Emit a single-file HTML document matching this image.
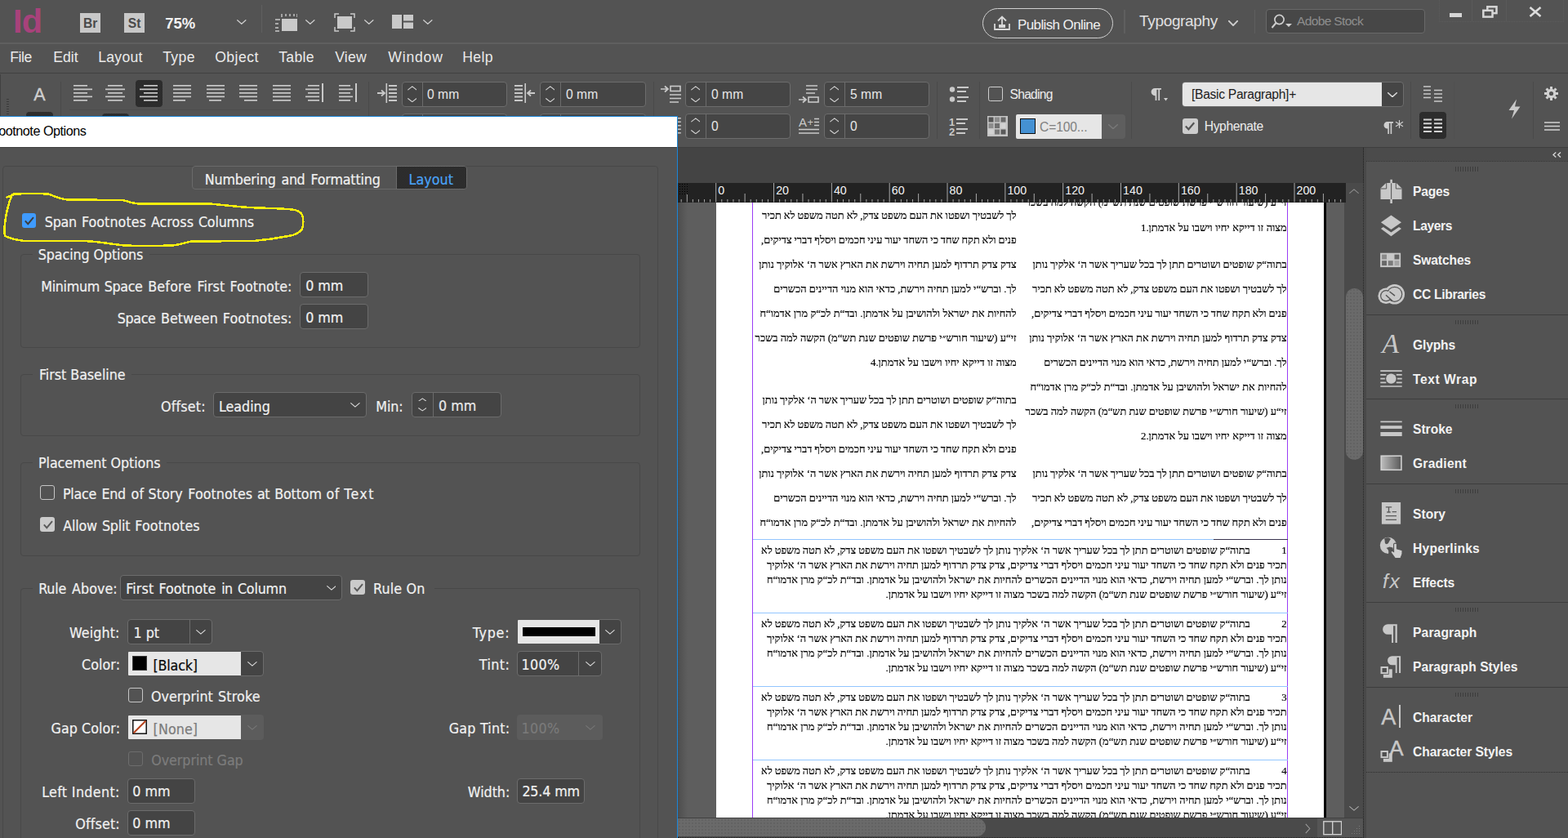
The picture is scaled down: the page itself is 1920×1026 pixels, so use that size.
<!DOCTYPE html>
<html lang="en">
<head>
<meta charset="utf-8">
<title>Footnote Options - Adobe InDesign</title>
<style>
html,body{margin:0;padding:0;background:#535353;}
body{width:1920px;height:1026px;overflow:hidden;position:relative;font-family:"Liberation Sans",sans-serif;color:#e4e4e4;}
#app{position:absolute;left:0;top:0;width:1920px;height:1026px;overflow:hidden;background:#535353;}
#app div,#app svg{position:absolute;box-sizing:border-box;}
.t{white-space:nowrap;line-height:1;}
.fl{font-family:"Liberation Sans",sans-serif;}
.fd{font-family:"DejaVu Sans Condensed","DejaVu Sans","Liberation Sans",sans-serif;font-stretch:condensed;}
.fs{font-family:"Liberation Serif","DejaVu Sans",serif;}

.h{white-space:nowrap;line-height:1;font-family:"Liberation Serif","DejaVu Sans",serif;font-size:12.8px;color:#000;-webkit-text-stroke:0.18px #000;}
.fd{-webkit-text-stroke:0.22px currentColor;}
</style>
</head>
<body>
<div id="app">
<div style="left:0px;top:0px;width:1920px;height:52px;background:#535353;"></div>
<div style="left:0px;top:52px;width:1920px;height:2px;background:#5f5f5f;"></div>
<div style="left:0px;top:54px;width:1920px;height:35px;background:#535353;"></div>
<div style="left:0px;top:89px;width:1920px;height:1.6px;background:#404040;"></div>
<div style="left:0px;top:90px;width:1920px;height:91px;background:#535353;"></div>
<div style="left:0px;top:180px;width:1920px;height:1px;background:#3e3e3e;"></div>
<div class="t fl" style="left:16.00px;top:5.00px;font-size:41.5px;letter-spacing:-0.690px;color:#a8427b;font-weight:700;">Id</div>
<div style="left:98.3px;top:15.5px;width:24.5px;height:24.3px;background:#c8c8c8;"></div>
<div class="t fl" style="left:101.94px;top:21.00px;font-size:15.6px;color:#4a4a4a;font-weight:700;">Br</div>
<div style="left:152.3px;top:15.5px;width:24.5px;height:24.3px;background:#c8c8c8;"></div>
<div class="t fl" style="left:156.80px;top:21.00px;font-size:15.6px;color:#4a4a4a;font-weight:700;">St</div>
<div class="t fl" style="left:202.30px;top:20.00px;font-size:18.5px;letter-spacing:-0.009px;color:#f2f2f2;font-weight:700;">75%</div>
<svg style="left:290.3px;top:24.2px;" width="11.6" height="6.2" viewBox="0 0 11.6 6.2"><polyline points="0.7,0.7 5.8,5.3 10.9,0.7" fill="none" stroke="#d0d0d0" stroke-width="1.2" stroke-linecap="round" stroke-linejoin="round"/></svg>
<div style="left:320px;top:6px;width:1px;height:34px;background:#5f5f5f;"></div>
<svg style="left:336px;top:16px;" width="28" height="23" viewBox="0 0 28 23"><rect x="9" y="7" width="19" height="15" fill="#c9c9c9"/><path d="M9 1v4M14 1v3M19 1v3M24 1v3M28 1v4M1 8h6M1 13h4M1 18h4M1 22h5" stroke="#c9c9c9" stroke-width="1.4" fill="none"/></svg>
<svg style="left:374.3px;top:24.2px;" width="11.6" height="6.2" viewBox="0 0 11.6 6.2"><polyline points="0.7,0.7 5.8,5.3 10.9,0.7" fill="none" stroke="#d0d0d0" stroke-width="1.2" stroke-linecap="round" stroke-linejoin="round"/></svg>
<svg style="left:409px;top:16px;" width="26" height="23" viewBox="0 0 26 23"><rect x="4" y="4" width="18" height="15" fill="#c9c9c9"/><path d="M1 6V1h5M20 1h5v5M25 17v5h-5M6 22H1v-5" stroke="#c9c9c9" stroke-width="1.5" fill="none"/></svg>
<svg style="left:446.3px;top:24.2px;" width="11.6" height="6.2" viewBox="0 0 11.6 6.2"><polyline points="0.7,0.7 5.8,5.3 10.9,0.7" fill="none" stroke="#d0d0d0" stroke-width="1.2" stroke-linecap="round" stroke-linejoin="round"/></svg>
<svg style="left:480px;top:18px;" width="26" height="18" viewBox="0 0 26 18"><rect x="0" y="0" width="12" height="17" fill="#c9c9c9"/><rect x="14" y="0" width="12" height="7.5" fill="#c9c9c9"/><rect x="14" y="9.5" width="12" height="7.5" fill="#c9c9c9"/></svg>
<svg style="left:518.3px;top:24.2px;" width="11.6" height="6.2" viewBox="0 0 11.6 6.2"><polyline points="0.7,0.7 5.8,5.3 10.9,0.7" fill="none" stroke="#d0d0d0" stroke-width="1.2" stroke-linecap="round" stroke-linejoin="round"/></svg>
<div style="left:1203px;top:10px;width:160px;height:37px;border:1px solid #d0d0d0;border-radius:18.5px;"></div>
<svg style="left:1216px;top:18px;" width="22" height="20" viewBox="0 0 22 20"><path d="M2 11v7h18v-7M11 14V3M6 7.5l5-5 5 5" fill="none" stroke="#d8d8d8" stroke-width="1.8"/><rect x="7" y="12" width="8" height="4" fill="#d8d8d8"/></svg>
<div class="t fl" style="left:1246.00px;top:22.00px;font-size:17px;letter-spacing:-0.616px;color:#f0f0f0;">Publish Online</div>
<div style="left:1376px;top:12px;width:1.5px;height:29px;background:#5f5f5f;"></div>
<div class="t fl" style="left:1395.00px;top:16.00px;font-size:19px;letter-spacing:-0.329px;color:#e0e0e0;">Typography</div>
<svg style="left:1504px;top:24.5px;" width="12" height="7" viewBox="0 0 12 7"><polyline points="0.7,0.7 6,6.1 11.3,0.7" fill="none" stroke="#d0d0d0" stroke-width="1.9" stroke-linecap="round" stroke-linejoin="round"/></svg>
<div style="left:1535.5px;top:12px;width:1.5px;height:29px;background:#5f5f5f;"></div>
<div style="left:1550px;top:11px;width:195px;height:30px;background:#474747;border:1px solid #696969;border-radius:4px;"></div>
<svg style="left:1556px;top:15px;" width="28" height="22" viewBox="0 0 28 22"><circle cx="10.5" cy="9" r="5.6" fill="none" stroke="#cfcfcf" stroke-width="1.7"/><path d="M6.5 13L1.5 19" stroke="#cfcfcf" stroke-width="2"/><path d="M18 14h8l-4 4z" fill="#cfcfcf"/></svg>
<div class="t fl" style="left:1588.00px;top:18.00px;font-size:15.5px;letter-spacing:-0.626px;color:#8e8e8e;">Adobe Stock</div>
<div style="left:1762px;top:-1px;width:153px;height:28px;border:1px solid #5c5c5c;border-style:dotted;border-top:none;"></div>
<div style="left:1802px;top:0px;width:1px;height:27px;background:#5a5a5a;"></div>
<div style="left:1844px;top:0px;width:1px;height:27px;background:#5a5a5a;"></div>
<div style="left:1775px;top:16px;width:15px;height:4.5px;background:#d6d6d6;"></div>
<svg style="left:1814.5px;top:7px;" width="19" height="15" viewBox="0 0 19 15"><rect x="6.300" y="1.300" width="11.200" height="7.800" fill="none" stroke="#d6d6d6" stroke-width="2.500"/><rect x="1.300" y="5.800" width="11.200" height="7.800" fill="#535353" stroke="#d6d6d6" stroke-width="2.500"/></svg>
<svg style="left:1872px;top:8px;" width="16" height="13" viewBox="0 0 16 13"><path d="M1.5 1l13 11M14.5 1l-13 11" stroke="#dcdcdc" stroke-width="2.6" fill="none"/></svg>
<div class="t fl" style="left:12.20px;top:62.00px;font-size:17.6px;letter-spacing:-0.437px;color:#eaeaea;">File</div>
<div class="t fl" style="left:65.20px;top:62.00px;font-size:17.6px;letter-spacing:0.071px;color:#eaeaea;">Edit</div>
<div class="t fl" style="left:120.20px;top:62.00px;font-size:17.6px;letter-spacing:0.296px;color:#eaeaea;">Layout</div>
<div class="t fl" style="left:199.20px;top:62.00px;font-size:17.6px;letter-spacing:0.364px;color:#eaeaea;">Type</div>
<div class="t fl" style="left:263.20px;top:62.00px;font-size:17.6px;letter-spacing:0.459px;color:#eaeaea;">Object</div>
<div class="t fl" style="left:341.20px;top:62.00px;font-size:17.6px;letter-spacing:0.308px;color:#eaeaea;">Table</div>
<div class="t fl" style="left:410.20px;top:62.00px;font-size:17.6px;letter-spacing:0.196px;color:#eaeaea;">View</div>
<div class="t fl" style="left:475.20px;top:62.00px;font-size:17.6px;letter-spacing:0.838px;color:#eaeaea;">Window</div>
<div class="t fl" style="left:566.20px;top:62.00px;font-size:17.6px;letter-spacing:0.354px;color:#eaeaea;">Help</div>
<div style="left:8px;top:121px;width:3px;height:22px;background:repeating-linear-gradient(180deg,#3a3a3a 0 1px,transparent 1px 3px);"></div>
<div style="left:0px;top:91px;width:1px;height:52px;background:#414141;"></div>
<div class="t fl" style="left:41.30px;top:106.00px;font-size:21.5px;color:#cfcfcf;-webkit-text-stroke:0.400px #cfcfcf;">A</div>
<div style="left:74px;top:100px;width:1px;height:43px;background:#4a4a4a;"></div>
<div style="left:32px;top:137px;width:33px;height:10px;border-radius:4px;background:repeating-conic-gradient(#242424 0% 25%,#353535 0% 50%) 0 0/2px 2px;"></div>
<div style="left:125px;top:139px;width:33px;height:10px;border-radius:4px;background:repeating-conic-gradient(#242424 0% 25%,#353535 0% 50%) 0 0/2px 2px;"></div>
<div style="left:85px;top:134px;width:356px;height:1px;background:#4d4d4d;"></div>
<div style="left:166px;top:98px;width:33px;height:33px;background:#2b2b2b;border-radius:4px;background:repeating-conic-gradient(#242424 0% 25%,#353535 0% 50%) 0 0/2px 2px;"></div>
<svg style="left:90px;top:104px;" width="26" height="22" viewBox="0 0 26 22"><rect x="0" y="0" width="17" height="1.7" fill="#c9c9c9"/><rect x="0" y="4.5" width="23" height="1.7" fill="#c9c9c9"/><rect x="0" y="9" width="17" height="1.7" fill="#c9c9c9"/><rect x="0" y="13.5" width="23" height="1.7" fill="#c9c9c9"/><rect x="0" y="18" width="17" height="1.7" fill="#c9c9c9"/></svg>
<svg style="left:129px;top:104px;" width="26" height="22" viewBox="0 0 26 22"><rect x="3" y="0" width="18" height="1.7" fill="#c9c9c9"/><rect x="0" y="4.5" width="24" height="1.7" fill="#c9c9c9"/><rect x="3" y="9" width="18" height="1.7" fill="#c9c9c9"/><rect x="0" y="13.5" width="24" height="1.7" fill="#c9c9c9"/><rect x="3" y="18" width="18" height="1.7" fill="#c9c9c9"/></svg>
<svg style="left:171px;top:104px;" width="26" height="22" viewBox="0 0 26 22"><rect x="5" y="0" width="17" height="1.7" fill="#c9c9c9"/><rect x="0" y="4.5" width="22" height="1.7" fill="#c9c9c9"/><rect x="5" y="9" width="17" height="1.7" fill="#c9c9c9"/><rect x="0" y="13.5" width="22" height="1.7" fill="#c9c9c9"/><rect x="5" y="18" width="17" height="1.7" fill="#c9c9c9"/></svg>
<svg style="left:212px;top:104px;" width="26" height="22" viewBox="0 0 26 22"><rect x="0" y="0" width="22" height="1.7" fill="#c9c9c9"/><rect x="0" y="4.5" width="22" height="1.7" fill="#c9c9c9"/><rect x="0" y="9" width="22" height="1.7" fill="#c9c9c9"/><rect x="0" y="13.5" width="22" height="1.7" fill="#c9c9c9"/><rect x="0" y="18" width="15" height="1.7" fill="#c9c9c9"/></svg>
<svg style="left:253px;top:104px;" width="26" height="22" viewBox="0 0 26 22"><rect x="0" y="0" width="22" height="1.7" fill="#c9c9c9"/><rect x="0" y="4.5" width="22" height="1.7" fill="#c9c9c9"/><rect x="0" y="9" width="22" height="1.7" fill="#c9c9c9"/><rect x="0" y="13.5" width="22" height="1.7" fill="#c9c9c9"/><rect x="3" y="18" width="15" height="1.7" fill="#c9c9c9"/></svg>
<svg style="left:293px;top:104px;" width="26" height="22" viewBox="0 0 26 22"><rect x="0" y="0" width="22" height="1.7" fill="#c9c9c9"/><rect x="0" y="4.5" width="22" height="1.7" fill="#c9c9c9"/><rect x="0" y="9" width="22" height="1.7" fill="#c9c9c9"/><rect x="0" y="13.5" width="22" height="1.7" fill="#c9c9c9"/><rect x="6" y="18" width="16" height="1.7" fill="#c9c9c9"/></svg>
<svg style="left:334px;top:104px;" width="26" height="22" viewBox="0 0 26 22"><rect x="0" y="0" width="22" height="1.7" fill="#c9c9c9"/><rect x="0" y="4.5" width="22" height="1.7" fill="#c9c9c9"/><rect x="0" y="9" width="22" height="1.7" fill="#c9c9c9"/><rect x="0" y="13.5" width="22" height="1.7" fill="#c9c9c9"/><rect x="0" y="18" width="22" height="1.7" fill="#c9c9c9"/></svg>
<svg style="left:374px;top:104px;" width="26" height="22" viewBox="0 0 26 22"><rect x="3" y="0" width="14" height="1.7" fill="#c9c9c9"/><rect x="0" y="4.5" width="17" height="1.7" fill="#c9c9c9"/><rect x="3" y="9" width="14" height="1.7" fill="#c9c9c9"/><rect x="0" y="13.5" width="17" height="1.7" fill="#c9c9c9"/><rect x="3" y="18" width="14" height="1.7" fill="#c9c9c9"/></svg>
<svg style="left:415px;top:104px;" width="26" height="22" viewBox="0 0 26 22"><rect x="0" y="0" width="14" height="1.7" fill="#c9c9c9"/><rect x="0" y="4.5" width="17" height="1.7" fill="#c9c9c9"/><rect x="0" y="9" width="14" height="1.7" fill="#c9c9c9"/><rect x="0" y="13.5" width="17" height="1.7" fill="#c9c9c9"/><rect x="0" y="18" width="14" height="1.7" fill="#c9c9c9"/></svg>
<div style="left:393.5px;top:102px;width:2px;height:23px;background:#c9c9c9;"></div>
<div style="left:434.5px;top:102px;width:2px;height:23px;background:#c9c9c9;"></div>
<div style="left:451px;top:100px;width:1px;height:80px;background:#4a4a4a;"></div>
<svg style="left:461px;top:102px;" width="26" height="24" viewBox="0 0 26 24"><path d="M1 12h8M6 8.5l4 3.5-4 3.5" stroke="#c9c9c9" stroke-width="1.8" fill="none"/><rect x="11.5" y="0" width="1.6" height="24" fill="#c9c9c9"/><path d="M15 3h10M15 7.5h10M15 12h10M15 16.5h10M15 21h10" stroke="#c9c9c9" stroke-width="1.8"/></svg>
<div style="left:492px;top:100px;width:129px;height:31px;background:#454545;border:1px solid #6c6c6c;border-radius:4px;"></div>
<div style="left:517px;top:101px;width:1px;height:29px;background:#6c6c6c;"></div>
<svg style="left:498.7px;top:105.2px;" width="11.6" height="5.6" viewBox="0 0 11.6 5.6"><polyline points="0.7,4.8999999999999995 5.8,0.9 10.9,4.8999999999999995" fill="none" stroke="#d4d4d4" stroke-width="1.1" stroke-linecap="round" stroke-linejoin="round"/></svg>
<svg style="left:498.7px;top:119.9px;" width="11.6" height="5.6" viewBox="0 0 11.6 5.6"><polyline points="0.7,0.7 5.8,4.7 10.9,0.7" fill="none" stroke="#d4d4d4" stroke-width="1.1" stroke-linecap="round" stroke-linejoin="round"/></svg>
<div class="t fl" style="left:523.00px;top:108.00px;font-size:15.6px;letter-spacing:0.054px;color:#e8e8e8;">0 mm</div>
<svg style="left:630px;top:102px;" width="26" height="24" viewBox="0 0 26 24"><path d="M25 12h-8M20 8.5l-4 3.5 4 3.5" stroke="#c9c9c9" stroke-width="1.8" fill="none"/><rect x="12.4" y="0" width="1.6" height="24" fill="#c9c9c9"/><path d="M0 3h10M0 7.5h10M0 12h10M0 16.5h10M0 21h10" stroke="#c9c9c9" stroke-width="1.8"/></svg>
<div style="left:661px;top:100px;width:130px;height:31px;background:#454545;border:1px solid #6c6c6c;border-radius:4px;"></div>
<div style="left:686px;top:101px;width:1px;height:29px;background:#6c6c6c;"></div>
<svg style="left:667.7px;top:105.2px;" width="11.6" height="5.6" viewBox="0 0 11.6 5.6"><polyline points="0.7,4.8999999999999995 5.8,0.9 10.9,4.8999999999999995" fill="none" stroke="#d4d4d4" stroke-width="1.1" stroke-linecap="round" stroke-linejoin="round"/></svg>
<svg style="left:667.7px;top:119.9px;" width="11.6" height="5.6" viewBox="0 0 11.6 5.6"><polyline points="0.7,0.7 5.8,4.7 10.9,0.7" fill="none" stroke="#d4d4d4" stroke-width="1.1" stroke-linecap="round" stroke-linejoin="round"/></svg>
<div class="t fl" style="left:693.00px;top:108.00px;font-size:15.6px;letter-spacing:0.054px;color:#e8e8e8;">0 mm</div>
<div style="left:492px;top:139px;width:129px;height:31px;background:#454545;border:1px solid #6c6c6c;border-radius:4px;"></div>
<div style="left:517px;top:140px;width:1px;height:29px;background:#6c6c6c;"></div>
<svg style="left:498.7px;top:144.2px;" width="11.6" height="5.6" viewBox="0 0 11.6 5.6"><polyline points="0.7,4.8999999999999995 5.8,0.9 10.9,4.8999999999999995" fill="none" stroke="#d4d4d4" stroke-width="1.1" stroke-linecap="round" stroke-linejoin="round"/></svg>
<svg style="left:498.7px;top:158.9px;" width="11.6" height="5.6" viewBox="0 0 11.6 5.6"><polyline points="0.7,0.7 5.8,4.7 10.9,0.7" fill="none" stroke="#d4d4d4" stroke-width="1.1" stroke-linecap="round" stroke-linejoin="round"/></svg>
<div style="left:661px;top:139px;width:130px;height:31px;background:#454545;border:1px solid #6c6c6c;border-radius:4px;"></div>
<div style="left:686px;top:140px;width:1px;height:29px;background:#6c6c6c;"></div>
<svg style="left:667.7px;top:144.2px;" width="11.6" height="5.6" viewBox="0 0 11.6 5.6"><polyline points="0.7,4.8999999999999995 5.8,0.9 10.9,4.8999999999999995" fill="none" stroke="#d4d4d4" stroke-width="1.1" stroke-linecap="round" stroke-linejoin="round"/></svg>
<svg style="left:667.7px;top:158.9px;" width="11.6" height="5.6" viewBox="0 0 11.6 5.6"><polyline points="0.7,0.7 5.8,4.7 10.9,0.7" fill="none" stroke="#d4d4d4" stroke-width="1.1" stroke-linecap="round" stroke-linejoin="round"/></svg>
<div style="left:799.5px;top:100px;width:1px;height:80px;background:#4a4a4a;"></div>
<svg style="left:809px;top:104px;" width="26" height="24" viewBox="0 0 26 24"><path d="M0 5h8M5 1.5l4 3.5-4 3.5" stroke="#c9c9c9" stroke-width="1.7" fill="none"/><rect x="12" y="1.5" width="12" height="6" fill="none" stroke="#c9c9c9" stroke-width="1.6"/><path d="M11 12h14M11 16.5h14M11 21h11" stroke="#c9c9c9" stroke-width="1.7"/></svg>
<div style="left:839px;top:100px;width:129px;height:31px;background:#454545;border:1px solid #6c6c6c;border-radius:4px;"></div>
<div style="left:864px;top:101px;width:1px;height:29px;background:#6c6c6c;"></div>
<svg style="left:845.7px;top:105.2px;" width="11.6" height="5.6" viewBox="0 0 11.6 5.6"><polyline points="0.7,4.8999999999999995 5.8,0.9 10.9,4.8999999999999995" fill="none" stroke="#d4d4d4" stroke-width="1.1" stroke-linecap="round" stroke-linejoin="round"/></svg>
<svg style="left:845.7px;top:119.9px;" width="11.6" height="5.6" viewBox="0 0 11.6 5.6"><polyline points="0.7,0.7 5.8,4.7 10.9,0.7" fill="none" stroke="#d4d4d4" stroke-width="1.1" stroke-linecap="round" stroke-linejoin="round"/></svg>
<div class="t fl" style="left:871.00px;top:108.00px;font-size:15.6px;letter-spacing:0.054px;color:#e8e8e8;">0 mm</div>
<svg style="left:830px;top:143px;" width="5" height="22" viewBox="0 0 5 22"><path d="M0 1.800h3.800M0 6.300h3.800M0 10.800h3.800M0 15.300h3.800M0 19.800h3.800" stroke="#c9c9c9" stroke-width="1.500"/></svg>
<div style="left:839px;top:139px;width:129px;height:31px;background:#454545;border:1px solid #6c6c6c;border-radius:4px;"></div>
<div style="left:864px;top:140px;width:1px;height:29px;background:#6c6c6c;"></div>
<svg style="left:845.7px;top:144.2px;" width="11.6" height="5.6" viewBox="0 0 11.6 5.6"><polyline points="0.7,4.8999999999999995 5.8,0.9 10.9,4.8999999999999995" fill="none" stroke="#d4d4d4" stroke-width="1.1" stroke-linecap="round" stroke-linejoin="round"/></svg>
<svg style="left:845.7px;top:158.9px;" width="11.6" height="5.6" viewBox="0 0 11.6 5.6"><polyline points="0.7,0.7 5.8,4.7 10.9,0.7" fill="none" stroke="#d4d4d4" stroke-width="1.1" stroke-linecap="round" stroke-linejoin="round"/></svg>
<div class="t fl" style="left:871.00px;top:147.00px;font-size:15.6px;color:#e8e8e8;">0</div>
<svg style="left:978px;top:104px;" width="26" height="24" viewBox="0 0 26 24"><path d="M9 1h14M9 5.5h14M9 10h11" stroke="#c9c9c9" stroke-width="1.7"/><path d="M0 18h8M5 14.5l4 3.5-4 3.5" stroke="#c9c9c9" stroke-width="1.7" fill="none"/><rect x="12" y="15" width="12" height="6" fill="none" stroke="#c9c9c9" stroke-width="1.6"/></svg>
<div style="left:1009px;top:100px;width:129px;height:31px;background:#454545;border:1px solid #6c6c6c;border-radius:4px;"></div>
<div style="left:1034px;top:101px;width:1px;height:29px;background:#6c6c6c;"></div>
<svg style="left:1015.7px;top:105.2px;" width="11.6" height="5.6" viewBox="0 0 11.6 5.6"><polyline points="0.7,4.8999999999999995 5.8,0.9 10.9,4.8999999999999995" fill="none" stroke="#d4d4d4" stroke-width="1.1" stroke-linecap="round" stroke-linejoin="round"/></svg>
<svg style="left:1015.7px;top:119.9px;" width="11.6" height="5.6" viewBox="0 0 11.6 5.6"><polyline points="0.7,0.7 5.8,4.7 10.9,0.7" fill="none" stroke="#d4d4d4" stroke-width="1.1" stroke-linecap="round" stroke-linejoin="round"/></svg>
<div class="t fl" style="left:1041.00px;top:108.00px;font-size:15.6px;letter-spacing:0.054px;color:#e8e8e8;">5 mm</div>
<div class="t fl" style="left:978.00px;top:142.00px;font-size:15px;color:#c9c9c9;">A</div>
<div class="t fl" style="left:988.50px;top:143.00px;font-size:13px;color:#c9c9c9;">+</div>
<svg style="left:978px;top:144px;" width="26" height="22" viewBox="0 0 26 22"><path d="M19 1.5h6M19 5.5h6M19 9.5h6M0 14.5h25M0 19h25" stroke="#c9c9c9" stroke-width="1.6"/></svg>
<div style="left:1009px;top:139px;width:129px;height:31px;background:#454545;border:1px solid #6c6c6c;border-radius:4px;"></div>
<div style="left:1034px;top:140px;width:1px;height:29px;background:#6c6c6c;"></div>
<svg style="left:1015.7px;top:144.2px;" width="11.6" height="5.6" viewBox="0 0 11.6 5.6"><polyline points="0.7,4.8999999999999995 5.8,0.9 10.9,4.8999999999999995" fill="none" stroke="#d4d4d4" stroke-width="1.1" stroke-linecap="round" stroke-linejoin="round"/></svg>
<svg style="left:1015.7px;top:158.9px;" width="11.6" height="5.6" viewBox="0 0 11.6 5.6"><polyline points="0.7,0.7 5.8,4.7 10.9,0.7" fill="none" stroke="#d4d4d4" stroke-width="1.1" stroke-linecap="round" stroke-linejoin="round"/></svg>
<div class="t fl" style="left:1041.00px;top:147.00px;font-size:15.6px;color:#e8e8e8;">0</div>
<div style="left:1147px;top:100px;width:1px;height:70px;background:#4a4a4a;"></div>
<svg style="left:1162px;top:105px;" width="25" height="21" viewBox="0 0 25 21"><circle cx="4" cy="4.5" r="3.2" fill="#c9c9c9"/><circle cx="4" cy="16.5" r="3.2" fill="#c9c9c9"/><path d="M10 2h14M10 7h11M10 14h14M10 19h11" stroke="#c9c9c9" stroke-width="1.8"/></svg>
<div class="t fl" style="left:1162.00px;top:143.00px;font-size:13px;color:#c9c9c9;font-weight:700;">1</div>
<div class="t fl" style="left:1162.00px;top:155.00px;font-size:13px;color:#c9c9c9;font-weight:700;">2</div>
<svg style="left:1171px;top:144px;" width="16" height="22" viewBox="0 0 16 22"><path d="M0 2h14M0 7h11M0 14h14M0 19h11" stroke="#c9c9c9" stroke-width="1.8"/></svg>
<div style="left:1199px;top:100px;width:1px;height:70px;background:#4a4a4a;"></div>
<div style="left:1210px;top:106px;width:18px;height:18px;border:1px solid #cfcfcf;border-radius:2.5px;border-width:1.3px;"></div>
<div class="t fl" style="left:1236.60px;top:108.00px;font-size:15.6px;letter-spacing:-0.747px;color:#ededed;">Shading</div>
<svg style="left:1209px;top:142px;" width="25" height="25" viewBox="0 0 25 25"><rect width="25" height="25" fill="#c4c4c4"/><rect x="1.5" y="1.5" width="6" height="6" fill="#555"/><rect x="9" y="1.5" width="6" height="6" fill="#8c8c8c"/><rect x="16.5" y="1.5" width="6" height="6" fill="#6a6a6a"/><rect x="1.5" y="9" width="6" height="6" fill="#8c8c8c"/><rect x="9" y="9" width="6" height="6" fill="#707070"/><rect x="16.5" y="9" width="6" height="6" fill="#d2d2d2"/><rect x="1.5" y="16.5" width="6" height="6" fill="#d2d2d2"/><rect x="9" y="16.5" width="6" height="6" fill="#777"/><rect x="16.5" y="16.5" width="6" height="6" fill="#5a5a5a"/></svg>
<div style="left:1244px;top:140px;width:134px;height:30px;background:#5e5e5e;border-radius:4px;"></div>
<div style="left:1244px;top:140px;width:105px;height:30px;background:#e6e6e6;border-radius:2px 0 0 2px;"></div>
<div style="left:1249px;top:145px;width:18.5px;height:18.5px;background:#4591d3;border:1.6px solid #0c0c0c;"></div>
<div class="t fl" style="left:1273.00px;top:148.00px;font-size:15.6px;letter-spacing:-0.110px;color:#7f7f7f;">C=100...</div>
<svg style="left:1357px;top:151.5px;" width="12" height="6.5" viewBox="0 0 12 6.5"><polyline points="0.7,0.7 6,5.6 11.3,0.7" fill="none" stroke="#777" stroke-width="1.5" stroke-linecap="round" stroke-linejoin="round"/></svg>
<div style="left:1385px;top:100px;width:1px;height:70px;background:#4a4a4a;"></div>
<svg style="left:1409px;top:107.5px;" width="13" height="15" viewBox="0 0 13 15"><path d="M5.2 0H13v1.8h-1.900V15H9.300V1.800H7.400V15H5.600V9.200H5.200a4.600 4.600 0 0 1 0-9.200z" fill="#cfcfcf"/></svg>
<svg style="left:1425px;top:120px;" width="5" height="4" viewBox="0 0 5 4"><path d="M0 0h5l-2.5 3.4z" fill="#cfcfcf"/></svg>
<div style="left:1447px;top:100px;width:272px;height:31px;background:#454545;border:1px solid #6c6c6c;border-radius:4px;"></div>
<div style="left:1448px;top:101px;width:243.5px;height:29px;background:#e6e6e6;border-radius:3px 0 0 3px;"></div>
<div class="t fl" style="left:1459.00px;top:108.00px;font-size:15.6px;letter-spacing:-0.281px;color:#1c1c1c;">[Basic Paragraph]+</div>
<svg style="left:1699px;top:112.5px;" width="12" height="6.5" viewBox="0 0 12 6.5"><polyline points="0.7,0.7 6,5.6 11.3,0.7" fill="none" stroke="#dadada" stroke-width="1.5" stroke-linecap="round" stroke-linejoin="round"/></svg>
<div style="left:1447.5px;top:145px;width:19px;height:19px;background:#cdcdcd;border-radius:3px;"></div>
<svg style="left:1450px;top:148px;" width="14" height="13" viewBox="0 0 14 13"><path d="M1.800 6.500l3.600 3.800L12.200 2.200" stroke="#555" stroke-width="2.100" fill="none"/></svg>
<div class="t fl" style="left:1474.80px;top:147.00px;font-size:15.6px;letter-spacing:-0.381px;color:#ededed;">Hyphenate</div>
<svg style="left:1694px;top:148.5px;" width="12" height="15" viewBox="0 0 12 15"><path d="M4.800 0H12v1.700h-1.800V15H8.600V1.700H6.900V15H5.300V8.600H4.800a4.300 4.300 0 0 1 0-8.600z" fill="#cfcfcf"/></svg>
<svg style="left:1707.5px;top:146.5px;" width="11" height="11" viewBox="0 0 11 11"><path d="M5.500 0v10M1 2.300l9 5.400M10 2.300l-9 5.400" stroke="#cfcfcf" stroke-width="1.100"/></svg>
<div style="left:1727px;top:100px;width:1px;height:70px;background:#4a4a4a;"></div>
<svg style="left:1743px;top:105px;" width="23" height="21" viewBox="0 0 23 21"><path d="M0 1h9M0 5.5h9M0 10h9M0 14.5h9M13 5.5h10M13 10h10M13 14.5h10M13 19h10" stroke="#c9c9c9" stroke-width="1.7"/></svg>
<div style="left:1737.5px;top:137px;width:33px;height:33px;background:#2b2b2b;border-radius:4px;background:repeating-conic-gradient(#242424 0% 25%,#353535 0% 50%) 0 0/2px 2px;"></div>
<svg style="left:1743px;top:145px;" width="23" height="18" viewBox="0 0 23 18"><path d="M0 1.5h10M0 6.3h10M0 11.1h10M0 16h10M13 1.5h10M13 6.3h10M13 11.1h10M13 16h10" stroke="#d2d2d2" stroke-width="2.1"/></svg>
<div style="left:1780px;top:100px;width:1px;height:70px;background:#505050;"></div>
<div style="left:1876.5px;top:100px;width:1px;height:70px;background:#4a4a4a;"></div>
<svg style="left:1846px;top:121px;" width="17" height="25" viewBox="0 0 17 25"><path d="M11 0.5L1.5 14h6.5L5 24.5 15.5 9.5H9z" fill="#c9c9c9"/></svg>
<svg style="left:1891px;top:106px;" width="17" height="17" viewBox="0 0 17 17"><circle cx="8.5" cy="8.5" r="4.2" fill="none" stroke="#d2d2d2" stroke-width="3.2"/><g stroke="#d2d2d2" stroke-width="3"><path d="M8.5 0v3M8.5 14v3M0 8.5h3M14 8.5h3M2.5 2.5l2.1 2.1M12.4 12.4l2.1 2.1M2.5 14.5l2.1-2.1M12.4 4.6l2.1-2.1"/></g></svg>
<svg style="left:1890.5px;top:149px;" width="19" height="11" viewBox="0 0 19 11"><path d="M0 1h19M0 5.5h19M0 10h19" stroke="#d2d2d2" stroke-width="1.6"/></svg>
<div style="left:830px;top:181px;width:840px;height:43px;background:#444444;"></div>
<div style="left:830px;top:224px;width:818px;height:777px;background:#5e5e5e;"></div>
<div style="left:830px;top:224px;width:12px;height:777px;background:linear-gradient(90deg,#4e4e4e,#5e5e5e);"></div>
<div style="left:877px;top:247px;width:744.5px;height:754px;background:#ffffff;"></div>
<div style="left:1621.3px;top:247px;width:2.4px;height:754px;background:#000000;"></div>
<div style="left:921px;top:247px;width:1px;height:754px;background:#9a3cf5;"></div>
<div style="left:1576px;top:247px;width:1.3px;height:754px;background:#9a3cf5;"></div>
<div style="left:921.5px;top:660px;width:655px;height:1px;background:#93c6ff;"></div>
<div style="left:921.5px;top:750px;width:655px;height:1px;background:#93c6ff;"></div>
<div style="left:921.5px;top:840px;width:655px;height:1px;background:#93c6ff;"></div>
<div style="left:921.5px;top:930px;width:655px;height:1px;background:#93c6ff;"></div>
<div style="left:1486px;top:659.6px;width:90.5px;height:1.4px;background:#3a3550;"></div>
<div id="pg" style="left:877px;top:247px;width:744px;height:754px;overflow:hidden;will-change:transform;">
<div class="h" dir="rtl" style="right:45.40px;top:-5.00px;word-spacing:0.084px;">זי“ע (שיעור חורש״י פרשת שופטים שנת תש“מ) הקשה למה בשכר</div>
<div class="h" dir="rtl" style="right:45.40px;top:26.00px;word-spacing:0.374px;">מצוה זו דייקא יחיו וישבו על אדמתן.1</div>
<div class="h" dir="rtl" style="right:45.40px;top:71.00px;word-spacing:-0.229px;">בתוה“ק שופטים ושוטרים תתן לך בכל שעריך אשר ה‘ אלקיך נותן</div>
<div class="h" dir="rtl" style="right:45.40px;top:101.00px;word-spacing:-0.150px;">לך לשבטיך ושפטו את העם משפט צדק, לא תטה משפט לא תכיר</div>
<div class="h" dir="rtl" style="right:45.40px;top:131.00px;word-spacing:-0.330px;">פנים ולא תקח שחד כי השחד יעור עיני חכמים ויסלף דברי צדיקים,</div>
<div class="h" dir="rtl" style="right:45.40px;top:161.00px;word-spacing:0.049px;">צדק צדק תרדוף למען תחיה וירשת את הארץ אשר ה‘ אלוקיך נותן</div>
<div class="h" dir="rtl" style="right:45.40px;top:191.00px;word-spacing:-0.000px;">לך. וברש“י למען תחיה וירשת, כדאי הוא מנוי הדיינים הכשרים</div>
<div class="h" dir="rtl" style="right:45.40px;top:221.00px;word-spacing:0.291px;">להחיות את ישראל ולהושיבן על אדמתן. ובד“ת לכ“ק מרן אדמו“ח</div>
<div class="h" dir="rtl" style="right:45.40px;top:251.00px;word-spacing:0.084px;">זי“ע (שיעור חורש״י פרשת שופטים שנת תש“מ) הקשה למה בשכר</div>
<div class="h" dir="rtl" style="right:45.40px;top:281.00px;word-spacing:0.374px;">מצוה זו דייקא יחיו וישבו על אדמתן.2</div>
<div class="h" dir="rtl" style="right:45.40px;top:327.00px;word-spacing:-0.229px;">בתוה“ק שופטים ושוטרים תתן לך בכל שעריך אשר ה‘ אלקיך נותן</div>
<div class="h" dir="rtl" style="right:45.40px;top:357.00px;word-spacing:-0.150px;">לך לשבטיך ושפטו את העם משפט צדק, לא תטה משפט לא תכיר</div>
<div class="h" dir="rtl" style="right:45.40px;top:387.00px;word-spacing:-0.330px;">פנים ולא תקח שחד כי השחד יעור עיני חכמים ויסלף דברי צדיקים,</div>
<div class="h" dir="rtl" style="right:376.40px;top:11.00px;word-spacing:-0.150px;">לך לשבטיך ושפטו את העם משפט צדק, לא תטה משפט לא תכיר</div>
<div class="h" dir="rtl" style="right:376.40px;top:41.00px;word-spacing:-0.330px;">פנים ולא תקח שחד כי השחד יעור עיני חכמים ויסלף דברי צדיקים,</div>
<div class="h" dir="rtl" style="right:376.40px;top:71.00px;word-spacing:0.049px;">צדק צדק תרדוף למען תחיה וירשת את הארץ אשר ה‘ אלוקיך נותן</div>
<div class="h" dir="rtl" style="right:376.40px;top:101.00px;word-spacing:-0.000px;">לך. וברש“י למען תחיה וירשת, כדאי הוא מנוי הדיינים הכשרים</div>
<div class="h" dir="rtl" style="right:376.40px;top:131.00px;word-spacing:0.291px;">להחיות את ישראל ולהושיבן על אדמתן. ובד“ת לכ“ק מרן אדמו“ח</div>
<div class="h" dir="rtl" style="right:376.40px;top:161.00px;word-spacing:0.084px;">זי“ע (שיעור חורש״י פרשת שופטים שנת תש“מ) הקשה למה בשכר</div>
<div class="h" dir="rtl" style="right:376.40px;top:191.00px;word-spacing:0.374px;">מצוה זו דייקא יחיו וישבו על אדמתן.4</div>
<div class="h" dir="rtl" style="right:376.40px;top:237.00px;word-spacing:-0.229px;">בתוה“ק שופטים ושוטרים תתן לך בכל שעריך אשר ה‘ אלקיך נותן</div>
<div class="h" dir="rtl" style="right:376.40px;top:267.00px;word-spacing:-0.150px;">לך לשבטיך ושפטו את העם משפט צדק, לא תטה משפט לא תכיר</div>
<div class="h" dir="rtl" style="right:376.40px;top:297.00px;word-spacing:-0.330px;">פנים ולא תקח שחד כי השחד יעור עיני חכמים ויסלף דברי צדיקים,</div>
<div class="h" dir="rtl" style="right:376.40px;top:327.00px;word-spacing:0.049px;">צדק צדק תרדוף למען תחיה וירשת את הארץ אשר ה‘ אלוקיך נותן</div>
<div class="h" dir="rtl" style="right:376.40px;top:357.00px;word-spacing:-0.000px;">לך. וברש“י למען תחיה וירשת, כדאי הוא מנוי הדיינים הכשרים</div>
<div class="h" dir="rtl" style="right:376.40px;top:387.00px;word-spacing:0.291px;">להחיות את ישראל ולהושיבן על אדמתן. ובד“ת לכ“ק מרן אדמו“ח</div>
<div class="h" dir="rtl" style="right:90.30px;top:421.00px;word-spacing:-0.192px;">בתוה“ק שופטים ושוטרים תתן לך בכל שעריך אשר ה‘ אלקיך נותן לך לשבטיך ושפטו את העם משפט צדק, לא תטה משפט לא</div>
<div class="h" dir="rtl" style="right:45.40px;top:439.00px;word-spacing:-0.117px;">תכיר פנים ולא תקח שחד כי השחד יעור עיני חכמים ויסלף דברי צדיקים, צדק צדק תרדוף למען תחיה וירשת את הארץ אשר ה‘ אלוקיך</div>
<div class="h" dir="rtl" style="right:45.40px;top:457.00px;word-spacing:0.141px;">נותן לך. וברש“י למען תחיה וירשת, כדאי הוא מנוי הדיינים הכשרים להחיות את ישראל ולהושיבן על אדמתן. ובד“ת לכ“ק מרן אדמו“ח</div>
<div class="h" dir="rtl" style="right:45.40px;top:475.00px;word-spacing:-0.087px;">זי“ע (שיעור חורש״י פרשת שופטים שנת תש“מ) הקשה למה בשכר מצוה זו דייקא יחיו וישבו על אדמתן.</div>
<div class="h" dir="rtl" style="right:90.30px;top:511.00px;word-spacing:-0.192px;">בתוה“ק שופטים ושוטרים תתן לך בכל שעריך אשר ה‘ אלקיך נותן לך לשבטיך ושפטו את העם משפט צדק, לא תטה משפט לא</div>
<div class="h" dir="rtl" style="right:45.40px;top:529.00px;word-spacing:-0.117px;">תכיר פנים ולא תקח שחד כי השחד יעור עיני חכמים ויסלף דברי צדיקים, צדק צדק תרדוף למען תחיה וירשת את הארץ אשר ה‘ אלוקיך</div>
<div class="h" dir="rtl" style="right:45.40px;top:547.00px;word-spacing:0.141px;">נותן לך. וברש“י למען תחיה וירשת, כדאי הוא מנוי הדיינים הכשרים להחיות את ישראל ולהושיבן על אדמתן. ובד“ת לכ“ק מרן אדמו“ח</div>
<div class="h" dir="rtl" style="right:45.40px;top:565.00px;word-spacing:-0.087px;">זי“ע (שיעור חורש״י פרשת שופטים שנת תש“מ) הקשה למה בשכר מצוה זו דייקא יחיו וישבו על אדמתן.</div>
<div class="h" dir="rtl" style="right:90.30px;top:601.00px;word-spacing:-0.192px;">בתוה“ק שופטים ושוטרים תתן לך בכל שעריך אשר ה‘ אלקיך נותן לך לשבטיך ושפטו את העם משפט צדק, לא תטה משפט לא</div>
<div class="h" dir="rtl" style="right:45.40px;top:619.00px;word-spacing:-0.117px;">תכיר פנים ולא תקח שחד כי השחד יעור עיני חכמים ויסלף דברי צדיקים, צדק צדק תרדוף למען תחיה וירשת את הארץ אשר ה‘ אלוקיך</div>
<div class="h" dir="rtl" style="right:45.40px;top:637.00px;word-spacing:0.141px;">נותן לך. וברש“י למען תחיה וירשת, כדאי הוא מנוי הדיינים הכשרים להחיות את ישראל ולהושיבן על אדמתן. ובד“ת לכ“ק מרן אדמו“ח</div>
<div class="h" dir="rtl" style="right:45.40px;top:655.00px;word-spacing:-0.087px;">זי“ע (שיעור חורש״י פרשת שופטים שנת תש“מ) הקשה למה בשכר מצוה זו דייקא יחיו וישבו על אדמתן.</div>
<div class="h" dir="rtl" style="right:90.30px;top:691.00px;word-spacing:-0.192px;">בתוה“ק שופטים ושוטרים תתן לך בכל שעריך אשר ה‘ אלקיך נותן לך לשבטיך ושפטו את העם משפט צדק, לא תטה משפט לא</div>
<div class="h" dir="rtl" style="right:45.40px;top:709.00px;word-spacing:-0.117px;">תכיר פנים ולא תקח שחד כי השחד יעור עיני חכמים ויסלף דברי צדיקים, צדק צדק תרדוף למען תחיה וירשת את הארץ אשר ה‘ אלוקיך</div>
<div class="h" dir="rtl" style="right:45.40px;top:727.00px;word-spacing:0.141px;">נותן לך. וברש“י למען תחיה וירשת, כדאי הוא מנוי הדיינים הכשרים להחיות את ישראל ולהושיבן על אדמתן. ובד“ת לכ“ק מרן אדמו“ח</div>
<div class="h" dir="rtl" style="right:45.40px;top:745.00px;word-spacing:-0.087px;">זי“ע (שיעור חורש״י פרשת שופטים שנת תש“מ) הקשה למה בשכר מצוה זו דייקא יחיו וישבו על אדמתן.</div>
<div class="h" style="left:692.2px;top:421.00px;">1</div>
<div class="h" style="left:692.2px;top:511.00px;">2</div>
<div class="h" style="left:692.2px;top:601.00px;">3</div>
<div class="h" style="left:692.2px;top:691.00px;">4</div>
</div>
<div style="left:830px;top:224px;width:818px;height:23.5px;background:#222222;"></div>
<svg style="left:830px;top:224px;" width="818" height="23.5" viewBox="0 0 818 23.5"><path d="M4.20 20v3.5M11.29 13v10.5M18.37 20v3.5M25.45 20v3.5M32.53 20v3.5M39.62 20v3.5M46.70 0v23.5M53.78 20v3.5M60.87 20v3.5M67.95 20v3.5M75.03 20v3.5M82.12 13v10.5M89.20 20v3.5M96.28 20v3.5M103.36 20v3.5M110.45 20v3.5M117.53 0v23.5M124.61 20v3.5M131.70 20v3.5M138.78 20v3.5M145.86 20v3.5M152.95 13v10.5M160.03 20v3.5M167.11 20v3.5M174.19 20v3.5M181.28 20v3.5M188.36 0v23.5M195.44 20v3.5M202.53 20v3.5M209.61 20v3.5M216.69 20v3.5M223.78 13v10.5M230.86 20v3.5M237.94 20v3.5M245.02 20v3.5M252.11 20v3.5M259.19 0v23.5M266.27 20v3.5M273.36 20v3.5M280.44 20v3.5M287.52 20v3.5M294.61 13v10.5M301.69 20v3.5M308.77 20v3.5M315.85 20v3.5M322.94 20v3.5M330.02 0v23.5M337.10 20v3.5M344.19 20v3.5M351.27 20v3.5M358.35 20v3.5M365.43 13v10.5M372.52 20v3.5M379.60 20v3.5M386.68 20v3.5M393.77 20v3.5M400.85 0v23.5M407.93 20v3.5M415.02 20v3.5M422.10 20v3.5M429.18 20v3.5M436.27 13v10.5M443.35 20v3.5M450.43 20v3.5M457.51 20v3.5M464.60 20v3.5M471.68 0v23.5M478.76 20v3.5M485.85 20v3.5M492.93 20v3.5M500.01 20v3.5M507.10 13v10.5M514.18 20v3.5M521.26 20v3.5M528.34 20v3.5M535.43 20v3.5M542.51 0v23.5M549.59 20v3.5M556.68 20v3.5M563.76 20v3.5M570.84 20v3.5M577.93 13v10.5M585.01 20v3.5M592.09 20v3.5M599.17 20v3.5M606.26 20v3.5M613.34 0v23.5M620.42 20v3.5M627.51 20v3.5M634.59 20v3.5M641.67 20v3.5M648.76 13v10.5M655.84 20v3.5M662.92 20v3.5M670.00 20v3.5M677.09 20v3.5M684.17 0v23.5M691.25 20v3.5M698.34 20v3.5M705.42 20v3.5M712.50 20v3.5M719.59 13v10.5M726.67 20v3.5M733.75 20v3.5M740.83 20v3.5M747.92 20v3.5M755.00 0v23.5M762.08 20v3.5M769.17 20v3.5M776.25 20v3.5M783.33 20v3.5M790.41 13v10.5M797.50 20v3.5M804.58 20v3.5M811.66 20v3.5" stroke="#a9a9a9" stroke-width="1" fill="none"/></svg>
<div style="left:831px;top:224px;width:13px;height:14px;background-image:radial-gradient(#000 0.8px,transparent 1px);background-size:3px 3px;"></div>
<div class="t fl" style="left:879.30px;top:226.00px;font-size:14.2px;color:#f4f4f4;">0</div>
<div class="t fl" style="left:950.13px;top:226.00px;font-size:14.2px;color:#f4f4f4;">20</div>
<div class="t fl" style="left:1020.96px;top:226.00px;font-size:14.2px;color:#f4f4f4;">40</div>
<div class="t fl" style="left:1091.79px;top:226.00px;font-size:14.2px;color:#f4f4f4;">60</div>
<div class="t fl" style="left:1162.62px;top:226.00px;font-size:14.2px;color:#f4f4f4;">80</div>
<div class="t fl" style="left:1233.45px;top:226.00px;font-size:14.2px;color:#f4f4f4;">100</div>
<div class="t fl" style="left:1304.28px;top:226.00px;font-size:14.2px;color:#f4f4f4;">120</div>
<div class="t fl" style="left:1375.11px;top:226.00px;font-size:14.2px;color:#f4f4f4;">140</div>
<div class="t fl" style="left:1445.94px;top:226.00px;font-size:14.2px;color:#f4f4f4;">160</div>
<div class="t fl" style="left:1516.77px;top:226.00px;font-size:14.2px;color:#f4f4f4;">180</div>
<div class="t fl" style="left:1587.60px;top:226.00px;font-size:14.2px;color:#f4f4f4;">200</div>
<div style="left:1647.5px;top:224px;width:21.5px;height:24px;background:#4a4a4a;"></div>
<div style="left:1646px;top:247.5px;width:23px;height:753.5px;background:#4a4a4a;"></div>
<div style="left:1648px;top:353px;width:20.7px;height:210px;background:#6a6a6a;border-radius:10.3px;background-image:radial-gradient(rgba(0,0,0,.16) 0.6px,transparent 0.8px);background-size:4px 4px;"></div>
<svg style="left:1652px;top:230.5px;" width="12" height="6" viewBox="0 0 12 6"><polyline points="0.7,5.3 6,0.9 11.3,5.3" fill="none" stroke="#8c8c8c" stroke-width="1.1" stroke-linecap="round" stroke-linejoin="round"/></svg>
<svg style="left:1652px;top:986.8px;" width="12" height="6" viewBox="0 0 12 6"><polyline points="0.7,0.7 6,5.1 11.3,0.7" fill="none" stroke="#a8a8a8" stroke-width="1.1" stroke-linecap="round" stroke-linejoin="round"/></svg>
<div style="left:830px;top:1001px;width:840px;height:24px;background:#4a4a4a;"></div>
<div style="left:830px;top:1001px;width:840px;height:1px;background:#404040;"></div>
<div style="left:810px;top:1002.4px;width:397px;height:22px;background:#6a6a6a;border-radius:11px;background-image:radial-gradient(rgba(0,0,0,.16) 0.6px,transparent 0.8px);background-size:4px 4px;"></div>
<div style="left:1613px;top:1002px;width:56px;height:23px;background:#555555;"></div>
<svg style="left:1597.5px;top:1007.5px;" width="7" height="13" viewBox="0 0 7 13"><polyline points="0.8,0.8 5.800,6.500 0.800,12.200" fill="none" stroke="#9a9a9a" stroke-width="1.100"/></svg>
<svg style="left:1619.7px;top:1005.2px;" width="23.5" height="17.5" viewBox="0 0 23.5 17.5"><rect x="0.800" y="0.800" width="21.800" height="15.900" fill="none" stroke="#d0d0d0" stroke-width="1.400"/><path d="M11.700 1v16" stroke="#d0d0d0" stroke-width="1.400"/></svg>
<div style="left:1651px;top:1007px;width:16px;height:16px;background-image:radial-gradient(#7a7a7a 0.800px,transparent 1px);background-size:3px 3px;clip-path:polygon(100% 0,100% 100%,0 100%);"></div>
<div style="left:830px;top:1025px;width:840px;height:1px;border-top:1px dotted #1c1c1c;"></div>
<div style="left:1669px;top:181px;width:1px;height:845px;border-left:1px dotted #1c1c1c;"></div>
<div style="left:1670px;top:181px;width:3px;height:845px;background:#494949;"></div>
<div style="left:1673px;top:181px;width:247px;height:845px;background:#535353;"></div>
<div style="left:1673px;top:181px;width:247px;height:16px;background:#4b4b4b;"></div>
<div style="left:1673px;top:197px;width:247px;height:1px;border-top:1px dotted #333;"></div>
<svg style="left:1901px;top:185.5px;" width="11" height="7" viewBox="0 0 11 7"><polyline points="4.3,0.6 1,3.5 4.3,6.4" fill="none" stroke="#d8d8d8" stroke-width="1.3"/><polyline points="10,0.6 6.7,3.5 10,6.4" fill="none" stroke="#d8d8d8" stroke-width="1.3"/></svg>
<div style="left:1673px;top:385px;width:247px;height:1px;background:#3d3d3d;"></div>
<div style="left:1673px;top:488px;width:247px;height:1px;background:#3d3d3d;"></div>
<div style="left:1673px;top:592px;width:247px;height:1px;background:#3d3d3d;"></div>
<div style="left:1673px;top:737px;width:247px;height:1px;background:#3d3d3d;"></div>
<div style="left:1673px;top:841px;width:247px;height:1px;background:#3d3d3d;"></div>
<div style="left:1673px;top:944.5px;width:247px;height:1px;border-top:1px dotted #2e2e2e;"></div>
<div style="left:1781.5px;top:204px;width:29px;height:5.5px;background:repeating-linear-gradient(90deg,#3d3d3d 0 1px,transparent 1px 3px);"></div>
<div style="left:1781.5px;top:391.5px;width:29px;height:5.5px;background:repeating-linear-gradient(90deg,#3d3d3d 0 1px,transparent 1px 3px);"></div>
<div style="left:1781.5px;top:494.5px;width:29px;height:5.5px;background:repeating-linear-gradient(90deg,#3d3d3d 0 1px,transparent 1px 3px);"></div>
<div style="left:1781.5px;top:598.5px;width:29px;height:5.5px;background:repeating-linear-gradient(90deg,#3d3d3d 0 1px,transparent 1px 3px);"></div>
<div style="left:1781.5px;top:743.5px;width:29px;height:5.5px;background:repeating-linear-gradient(90deg,#3d3d3d 0 1px,transparent 1px 3px);"></div>
<div style="left:1781.5px;top:847.5px;width:29px;height:5.5px;background:repeating-linear-gradient(90deg,#3d3d3d 0 1px,transparent 1px 3px);"></div>
<div class="t fl" style="left:1730.00px;top:227.00px;font-size:15.6px;letter-spacing:-0.189px;color:#f2f2f2;font-weight:700;">Pages</div>
<div class="t fl" style="left:1730.00px;top:269.00px;font-size:15.6px;letter-spacing:-0.381px;color:#f2f2f2;font-weight:700;">Layers</div>
<div class="t fl" style="left:1730.00px;top:311.00px;font-size:15.6px;letter-spacing:-0.117px;color:#f2f2f2;font-weight:700;">Swatches</div>
<div class="t fl" style="left:1730.00px;top:353.00px;font-size:15.6px;letter-spacing:-0.310px;color:#f2f2f2;font-weight:700;">CC Libraries</div>
<div class="t fl" style="left:1730.00px;top:415.00px;font-size:15.6px;letter-spacing:-0.143px;color:#f2f2f2;font-weight:700;">Glyphs</div>
<div class="t fl" style="left:1730.00px;top:457.00px;font-size:15.6px;letter-spacing:0.562px;color:#f2f2f2;font-weight:700;">Text Wrap</div>
<div class="t fl" style="left:1730.00px;top:518.00px;font-size:15.6px;letter-spacing:-0.005px;color:#f2f2f2;font-weight:700;">Stroke</div>
<div class="t fl" style="left:1730.00px;top:560.00px;font-size:15.6px;letter-spacing:0.235px;color:#f2f2f2;font-weight:700;">Gradient</div>
<div class="t fl" style="left:1730.00px;top:622.00px;font-size:15.6px;letter-spacing:0.028px;color:#f2f2f2;font-weight:700;">Story</div>
<div class="t fl" style="left:1730.00px;top:664.00px;font-size:15.6px;letter-spacing:0.226px;color:#f2f2f2;font-weight:700;">Hyperlinks</div>
<div class="t fl" style="left:1730.00px;top:706.00px;font-size:15.6px;letter-spacing:-0.142px;color:#f2f2f2;font-weight:700;">Effects</div>
<div class="t fl" style="left:1730.00px;top:767.00px;font-size:15.6px;letter-spacing:0.152px;color:#f2f2f2;font-weight:700;">Paragraph</div>
<div class="t fl" style="left:1730.00px;top:809.00px;font-size:15.6px;letter-spacing:0.068px;color:#f2f2f2;font-weight:700;">Paragraph Styles</div>
<div class="t fl" style="left:1730.00px;top:871.00px;font-size:15.6px;letter-spacing:0.044px;color:#f2f2f2;font-weight:700;">Character</div>
<div class="t fl" style="left:1730.00px;top:913.00px;font-size:15.6px;letter-spacing:-0.068px;color:#f2f2f2;font-weight:700;">Character Styles</div>
<svg style="left:1689px;top:219px;" width="29" height="31" viewBox="1689 219 29 31"><rect x="1702.300" y="219.800" width="2.600" height="29.200" fill="#c8c8c8"/><path d="M1690.500 230.500l6.700-6.500h5.800v20h-12.500z M1716.500 230.500l-6.700-6.500h-5.600v20h12.300z" fill="#c8c8c8"/><path d="M1690.500 231h7.200v-7 M1716.500 231h-7.200v-7 M1703.600 224.300v19.600" fill="none" stroke="#535353" stroke-width="1"/></svg>
<svg style="left:1689px;top:262px;" width="29" height="29" viewBox="1689 262 29 29"><path d="M1703.400 263.600l12.600 8.700-12.600 8.700-12.500-8.700z" fill="#c8c8c8"/><path d="M1693.800 278l9.600 6.500 9.600-6.500 3 2.100-12.600 9.100-12.500-9.100z" fill="#c8c8c8"/></svg>
<svg style="left:1690px;top:309px;" width="26" height="19" viewBox="1690 309 26 19"><rect x="1690.100" y="309.700" width="25" height="17.400" fill="#c8c8c8"/><rect x="1692.1" y="311.6" width="5.900" height="5.900" fill="#8a8a8a"/><rect x="1699.8" y="311.6" width="5.900" height="5.900" fill="#c9c9c9"/><rect x="1707.5" y="311.6" width="5.900" height="5.900" fill="#666"/><rect x="1692.1" y="319.2" width="5.900" height="5.900" fill="#686868"/><rect x="1699.8" y="319.2" width="5.900" height="5.900" fill="#7a7a7a"/><rect x="1707.5" y="319.2" width="5.900" height="5.900" fill="#a4a4a4"/></svg>
<svg style="left:1686px;top:347px;" width="36" height="27" viewBox="1686 347 36 27"><circle cx="1697.200" cy="362.200" r="9.800" fill="#c8c8c8"/><circle cx="1707.700" cy="360.300" r="12.300" fill="#c8c8c8"/><circle cx="1697.200" cy="362.200" r="7.100" fill="#535353"/><circle cx="1707.700" cy="360.300" r="9.600" fill="#535353"/><circle cx="1697.200" cy="362.200" r="5.900" fill="#c8c8c8"/><circle cx="1707.700" cy="360.300" r="8.400" fill="#c8c8c8"/><path d="M1697 361.300l8 7.200 M1701.500 357l6.500 5.200" stroke="#535353" stroke-width="1.500" fill="none"/></svg>
<div class="t fs" style="left:1692.30px;top:404.00px;font-size:34px;color:#c8c8c8;font-style:italic;">A</div>
<svg style="left:1690px;top:453px;" width="27" height="21" viewBox="1690 453 27 21"><path d="M1690.300 454.100h26.400M1690.300 473h26.400M1690.300 458.900h7M1709.800 458.900h6.900M1690.300 463.600h5.600M1711 463.600h5.700M1690.300 468.300h7M1709.800 468.300h6.900" stroke="#c8c8c8" stroke-width="1.700"/><circle cx="1703.400" cy="463.600" r="6.200" fill="#c8c8c8"/></svg>
<svg style="left:1690px;top:515px;" width="27" height="20" viewBox="1690 515 27 20"><rect x="1690.400" y="515.500" width="26.300" height="1.700" fill="#c8c8c8"/><rect x="1690.400" y="521.200" width="26.300" height="3.700" fill="#c8c8c8"/><rect x="1690.400" y="529" width="26.300" height="5" fill="#c8c8c8"/></svg>
<svg style="left:1690px;top:557px;" width="27" height="20" viewBox="1690 557 27 20"><defs><linearGradient id="gr"><stop offset="0" stop-color="#bdbdbd"/><stop offset="1" stop-color="#585858"/></linearGradient></defs><rect x="1691.200" y="558.200" width="24.700" height="17.100" fill="url(#gr)" stroke="#d0d0d0" stroke-width="1.600"/></svg>
<svg style="left:1691px;top:614px;" width="25" height="28" viewBox="1691 614 25 28"><rect x="1691.900" y="615" width="23.200" height="26.700" fill="#c8c8c8"/><path d="M1696.800 620.900h7.400M1700.500 620.900v6M1698.300 627h4.400M1704.600 626.600h5.400M1696.800 631.700h13.200M1696.800 636.400h13.200" stroke="#5a5a5a" stroke-width="1.300" fill="none"/></svg>
<svg style="left:1689px;top:656px;" width="29" height="29" viewBox="1689 656 29 29"><circle cx="1699.900" cy="667.800" r="10.100" fill="#c8c8c8"/><path d="M1695 659.500c1 2 .5 4 1 5.500s3 1.500 4 0 1.500-3.500 3-5l-2-1.600c-2-.2-4.300 0-6 1.100z M1697.500 671c2 1 3 3 2.800 5.500l-.3 1.400c3 .3 5-.5 6.500-2l-1-5.500-4-1z" fill="#535353"/><path d="M1706.600 666.500v9l-2.200-1.200-1.600 1.600 5.600 7.600h6.600l2-5.200v-4.600l-6.600-1.900v-5.300c0-1.800-3.800-1.800-3.800 0z" fill="#d0d0d0" stroke="#535353" stroke-width="1.100"/></svg>
<div class="t fl" style="left:1693.00px;top:700.00px;font-size:24.5px;letter-spacing:1.722px;color:#c8c8c8;font-style:italic;">fx</div>
<svg style="left:1692px;top:763px;" width="20" height="25" viewBox="1692 763 20 25"><path d="M1699.400 764.200h11.400v22.800h-2.300v-20.800h-2.400v20.800h-2v-10.200h-4.700a6.300 6.300 0 0 1 0-12.600z" fill="#c8c8c8"/></svg>
<svg style="left:1698px;top:802px;" width="18" height="23" viewBox="1698 802 18 23"><path d="M1704.600 803.200h10.500v20.800h-2v-19h-2.500v19h-1.800v-9.700h-4.200a5.550 5.550 0 0 1 0-11.100z" fill="#c8c8c8"/></svg>
<svg style="left:1689px;top:814.7px;" width="18" height="16" viewBox="1689 814.7 18 16"><rect x="1693.900" y="819" width="10.900" height="10.500" fill="#c8c8c8"/><rect x="1689.700" y="814.9" width="11" height="10.700" fill="#535353"/><rect x="1691.500" y="816.7" width="7.400" height="7.100" fill="#4f4f4f" stroke="#c8c8c8" stroke-width="2"/></svg>
<div class="t fl" style="left:1691.20px;top:864.00px;font-size:27.2px;letter-spacing:1.366px;color:#c8c8c8;-webkit-text-stroke:0.400px #c8c8c8;">A</div>
<div style="left:1713px;top:863px;width:2px;height:27.5px;background:#c8c8c8;"></div>
<div class="t fl" style="left:1701.30px;top:903.00px;font-size:26px;letter-spacing:0.658px;color:#c8c8c8;-webkit-text-stroke:0.400px #c8c8c8;">A</div>
<svg style="left:1689px;top:917.7px;" width="18" height="16" viewBox="1689 917.7 18 16"><rect x="1693.900" y="922" width="10.900" height="10.500" fill="#c8c8c8"/><rect x="1689.700" y="917.9" width="11" height="10.700" fill="#535353"/><rect x="1691.500" y="919.7" width="7.400" height="7.100" fill="#4f4f4f" stroke="#c8c8c8" stroke-width="2"/></svg>
<div style="left:0px;top:181px;width:830px;height:845px;background:#535353;"></div>
<div style="left:0px;top:142px;width:830px;height:1px;background:#1a86d9;"></div>
<div style="left:0px;top:143px;width:829px;height:37px;background:#ffffff;"></div>
<div style="left:829px;top:142px;width:1px;height:884px;background:#1a86d9;"></div>
<div class="t fl" style="left:-11.20px;top:152.00px;font-size:16.2px;letter-spacing:-0.474px;color:#000000;">Footnote Options</div>
<div style="left:3px;top:203px;width:803px;height:840px;border:1px solid #484848;border-radius:4px;"></div>
<div style="left:235px;top:203px;width:337px;height:29px;background:#535353;border:1px solid #6a6a6a;border-radius:4px;"></div>
<div style="left:486px;top:204px;width:85px;height:27px;background:#2c2c2c;border-radius:0 3px 3px 0;background:repeating-conic-gradient(#242424 0% 25%,#353535 0% 50%) 0 0/2px 2px;"></div>
<div style="left:485px;top:204px;width:1px;height:27px;background:#6a6a6a;"></div>
<div class="t fd" style="left:250.80px;top:212.00px;font-size:17.7px;letter-spacing:-0.171px;color:#f0f0f0;">Numbering</div>
<div class="t fd" style="left:344.60px;top:212.00px;font-size:17.7px;letter-spacing:-0.448px;color:#f0f0f0;">and</div>
<div class="t fd" style="left:380.40px;top:212.00px;font-size:17.7px;letter-spacing:-0.162px;color:#f0f0f0;">Formatting</div>
<div class="t fd" style="left:500.50px;top:212.00px;font-size:17.7px;letter-spacing:0.070px;color:#4aa3f7;">Layout</div>
<div style="left:27px;top:261px;width:17px;height:18px;background:#3f9bff;border-radius:3px;"></div>
<svg style="left:28.8px;top:264px;" width="14" height="13" viewBox="0 0 14 13"><path d="M1.8 6.4l3.5 3.8L12 2.2" stroke="#3c3c3c" stroke-width="1.9" fill="none"/></svg>
<div class="t fd" style="left:54.80px;top:264.00px;font-size:17.7px;letter-spacing:-0.212px;color:#f0f0f0;">Span</div>
<div class="t fd" style="left:99.90px;top:264.00px;font-size:17.7px;letter-spacing:0.081px;color:#f0f0f0;">Footnotes</div>
<div class="t fd" style="left:184.90px;top:264.00px;font-size:17.7px;letter-spacing:0.053px;color:#f0f0f0;">Across</div>
<div class="t fd" style="left:242.90px;top:264.00px;font-size:17.7px;letter-spacing:-0.163px;color:#f0f0f0;">Columns</div>
<svg style="left:0px;top:217px;" width="380" height="92" viewBox="0 0 380 92"><path d="M8.5 24.5 C 14 22, 17 21.5, 19.5 20.5 C 30 20, 50 20, 59 20.5 C 66 23, 74 26.5, 82 27.5 C 105 28, 135 27.5, 150 28 C 158 30, 163 32, 170 32.5 C 200 32.5, 240 32.5, 258 32.5 C 272 34, 290 36, 305 37 C 325 38, 350 38, 361 40 C 368 41.5, 370.5 45, 371 50 C 371.6 55, 371 60, 370 63.5 C 367 68, 360 71, 353 72 C 340 74.5, 322 77, 311 78 C 290 78.5, 250 78, 234 78.5 C 226 80.5, 218 83, 211 83.5 C 195 84, 165 84, 152 83.5 C 138 82, 118 78.5, 106 78.2 C 85 78, 45 78.5, 30 78 C 20 77, 9 74, 6 71.5 C 5 66, 6 55, 7.5 47 C 9 38, 12 28, 14.5 22 C 15.5 20.5, 17 20.3, 19 20.5" fill="none" stroke="#fbf10c" stroke-width="2.500" stroke-linecap="round" stroke-linejoin="round" shape-rendering="crispEdges"/></svg>
<div style="left:25px;top:311px;width:759px;height:115px;border:1px solid #484848;border-radius:4px;"></div>
<div style="left:40px;top:310px;width:143px;height:3px;background:#535353;"></div>
<div class="t fd" style="left:46.80px;top:304.00px;font-size:17.7px;letter-spacing:-0.085px;color:#f0f0f0;">Spacing Options</div>
<div class="t fd" style="left:50.20px;top:343.00px;font-size:17.7px;letter-spacing:-0.279px;color:#f0f0f0;">Minimum</div>
<div class="t fd" style="left:127.80px;top:343.00px;font-size:17.7px;letter-spacing:-0.360px;color:#f0f0f0;">Space</div>
<div class="t fd" style="left:181.20px;top:343.00px;font-size:17.7px;letter-spacing:0.220px;color:#f0f0f0;">Before</div>
<div class="t fd" style="left:241.50px;top:343.00px;font-size:17.7px;letter-spacing:0.089px;color:#f0f0f0;">First</div>
<div class="t fd" style="left:281.50px;top:343.00px;font-size:17.7px;letter-spacing:0.062px;color:#f0f0f0;">Footnote:</div>
<div style="left:367px;top:333px;width:84px;height:31px;background:#444444;border:1px solid #6c6c6c;border-radius:4px;"></div>
<div class="t fd" style="left:374.20px;top:342.00px;font-size:17.7px;color:#f0f0f0;">0 mm</div>
<div class="t fd" style="left:143.80px;top:382.00px;font-size:17.7px;letter-spacing:-0.360px;color:#f0f0f0;">Space</div>
<div class="t fd" style="left:197.00px;top:382.00px;font-size:17.7px;letter-spacing:0.023px;color:#f0f0f0;">Between</div>
<div class="t fd" style="left:272.80px;top:382.00px;font-size:17.7px;letter-spacing:0.097px;color:#f0f0f0;">Footnotes:</div>
<div style="left:367px;top:372px;width:84px;height:31px;background:#444444;border:1px solid #6c6c6c;border-radius:4px;"></div>
<div class="t fd" style="left:374.20px;top:381.00px;font-size:17.7px;color:#f0f0f0;">0 mm</div>
<div style="left:25px;top:458px;width:759px;height:76px;border:1px solid #484848;border-radius:4px;"></div>
<div style="left:40px;top:457px;width:121px;height:3px;background:#535353;"></div>
<div class="t fd" style="left:48.00px;top:451.00px;font-size:17.7px;letter-spacing:-0.027px;color:#f0f0f0;">First Baseline</div>
<div class="t fd" style="left:197.00px;top:490.00px;font-size:17.7px;letter-spacing:0.191px;color:#f0f0f0;">Offset:</div>
<div style="left:261px;top:480px;width:188px;height:31px;background:#444444;border:1px solid #6c6c6c;border-radius:4px;"></div>
<div class="t fd" style="left:268.00px;top:490.00px;font-size:17.7px;color:#f0f0f0;">Leading</div>
<svg style="left:429.3px;top:493.2px;" width="11.8" height="6" viewBox="0 0 11.8 6"><polyline points="0.7,0.7 5.9,5.1 11.1,0.7" fill="none" stroke="#dcdcdc" stroke-width="1.1" stroke-linecap="round" stroke-linejoin="round"/></svg>
<div class="t fd" style="left:460.20px;top:490.00px;font-size:17.7px;letter-spacing:-0.026px;color:#f0f0f0;">Min:</div>
<div style="left:504px;top:480px;width:110px;height:31px;background:#444444;border:1px solid #6c6c6c;border-radius:4px;"></div>
<div style="left:530px;top:481px;width:1px;height:29px;background:#6c6c6c;"></div>
<svg style="left:511.7px;top:486.6px;" width="10.6" height="4.8" viewBox="0 0 10.6 4.8"><polyline points="0.7,4.1 5.3,0.9 9.9,4.1" fill="none" stroke="#d4d4d4" stroke-width="1.1" stroke-linecap="round" stroke-linejoin="round"/></svg>
<svg style="left:511.7px;top:499.3px;" width="10.6" height="4.8" viewBox="0 0 10.6 4.8"><polyline points="0.7,0.7 5.3,3.9 9.9,0.7" fill="none" stroke="#d4d4d4" stroke-width="1.1" stroke-linecap="round" stroke-linejoin="round"/></svg>
<div class="t fd" style="left:537.00px;top:489.00px;font-size:17.7px;color:#e8e8e8;">0 mm</div>
<div style="left:25px;top:566px;width:759px;height:115px;border:1px solid #484848;border-radius:4px;"></div>
<div style="left:40px;top:565px;width:164px;height:3px;background:#535353;"></div>
<div class="t fd" style="left:47.00px;top:559.00px;font-size:17.7px;letter-spacing:-0.052px;color:#f0f0f0;">Placement Options</div>
<div style="left:49px;top:594px;width:18px;height:18px;border:1px solid #c6c6c6;border-radius:3px;border-width:1.2px;"></div>
<div class="t fd" style="left:77.00px;top:597.00px;font-size:17.7px;letter-spacing:-0.262px;color:#f0f0f0;">Place</div>
<div class="t fd" style="left:124.50px;top:597.00px;font-size:17.7px;letter-spacing:-0.315px;color:#f0f0f0;">End</div>
<div class="t fd" style="left:160.40px;top:597.00px;font-size:17.7px;letter-spacing:0.385px;color:#f0f0f0;">of</div>
<div class="t fd" style="left:181.60px;top:597.00px;font-size:17.7px;letter-spacing:0.035px;color:#f0f0f0;">Story</div>
<div class="t fd" style="left:230.30px;top:597.00px;font-size:17.7px;letter-spacing:0.059px;color:#f0f0f0;">Footnotes</div>
<div class="t fd" style="left:315.00px;top:597.00px;font-size:17.7px;letter-spacing:-0.593px;color:#f0f0f0;">at</div>
<div class="t fd" style="left:336.20px;top:597.00px;font-size:17.7px;letter-spacing:-0.126px;color:#f0f0f0;">Bottom</div>
<div class="t fd" style="left:399.60px;top:597.00px;font-size:17.7px;letter-spacing:0.535px;color:#f0f0f0;">of</div>
<div class="t fd" style="left:421.30px;top:597.00px;font-size:17.7px;letter-spacing:1.415px;color:#f0f0f0;">Text</div>
<div style="left:49px;top:633px;width:18px;height:18px;background:#cbcbcb;border-radius:3px;"></div>
<svg style="left:51.5px;top:636px;" width="14" height="13" viewBox="0 0 14 13"><path d="M1.8 6.4l3.5 3.8L12 2.2" stroke="#5a5a5a" stroke-width="1.9" fill="none"/></svg>
<div class="t fd" style="left:77.20px;top:636.00px;font-size:17.7px;letter-spacing:-0.175px;color:#f0f0f0;">Allow</div>
<div class="t fd" style="left:124.90px;top:636.00px;font-size:17.7px;letter-spacing:-0.198px;color:#f0f0f0;">Split</div>
<div class="t fd" style="left:165.30px;top:636.00px;font-size:17.7px;letter-spacing:0.115px;color:#f0f0f0;">Footnotes</div>
<div style="left:25px;top:720px;width:759px;height:330px;border:1px solid #484848;border-radius:4px;"></div>
<div style="left:40px;top:719px;width:492px;height:3px;background:#535353;"></div>
<div class="t fd" style="left:47.20px;top:713.00px;font-size:17.7px;letter-spacing:-0.116px;color:#f0f0f0;">Rule</div>
<div class="t fd" style="left:88.00px;top:713.00px;font-size:17.7px;letter-spacing:0.085px;color:#f0f0f0;">Above:</div>
<div style="left:147px;top:704px;width:272px;height:31px;background:#444444;border:1px solid #6c6c6c;border-radius:4px;"></div>
<div class="t fd" style="left:154.20px;top:713.00px;font-size:17.7px;letter-spacing:0.189px;color:#f0f0f0;">First</div>
<div class="t fd" style="left:194.50px;top:713.00px;font-size:17.7px;letter-spacing:-0.047px;color:#f0f0f0;">Footnote</div>
<div class="t fd" style="left:271.20px;top:713.00px;font-size:17.7px;letter-spacing:-0.505px;color:#f0f0f0;">in</div>
<div class="t fd" style="left:290.90px;top:713.00px;font-size:17.7px;letter-spacing:-0.175px;color:#f0f0f0;">Column</div>
<svg style="left:399.5px;top:717px;" width="11.8" height="6" viewBox="0 0 11.8 6"><polyline points="0.7,0.7 5.9,5.1 11.1,0.7" fill="none" stroke="#dcdcdc" stroke-width="1.1" stroke-linecap="round" stroke-linejoin="round"/></svg>
<div style="left:429px;top:710px;width:18px;height:18px;background:#cbcbcb;border-radius:3px;"></div>
<svg style="left:431.5px;top:713px;" width="14" height="13" viewBox="0 0 14 13"><path d="M1.8 6.4l3.5 3.8L12 2.2" stroke="#5a5a5a" stroke-width="1.9" fill="none"/></svg>
<div class="t fd" style="left:457.00px;top:713.00px;font-size:17.7px;letter-spacing:0.182px;color:#f0f0f0;">Rule On</div>
<div class="t fd" style="left:85.00px;top:767.00px;font-size:17.7px;letter-spacing:0.114px;color:#f0f0f0;">Weight:</div>
<div style="left:156px;top:758px;width:104px;height:31px;background:#444444;border:1px solid #6c6c6c;border-radius:4px;"></div>
<div class="t fd" style="left:163.60px;top:767.00px;font-size:17.7px;color:#f0f0f0;">1 pt</div>
<div style="left:232px;top:759px;width:1px;height:29px;background:#6c6c6c;"></div>
<svg style="left:240.3px;top:770.8px;" width="11.8" height="6" viewBox="0 0 11.8 6"><polyline points="0.7,0.7 5.9,5.1 11.1,0.7" fill="none" stroke="#dcdcdc" stroke-width="1.1" stroke-linecap="round" stroke-linejoin="round"/></svg>
<div class="t fd" style="left:100.10px;top:806.00px;font-size:17.7px;letter-spacing:0.068px;color:#f0f0f0;">Color:</div>
<div style="left:292px;top:797px;width:31px;height:31px;background:#444444;border:1px solid #6c6c6c;border-radius:4px;"></div>
<div style="left:157px;top:798px;width:138px;height:29px;background:#e6e6e6;border-radius:1px 0 0 1px;"></div>
<div style="left:162px;top:803px;width:18px;height:18px;background:#000;border:1px solid #3a3a3a;"></div>
<div class="t fd" style="left:187.60px;top:807.00px;font-size:17.7px;letter-spacing:-0.182px;color:#0a0a0a;">[Black]</div>
<svg style="left:303.2px;top:810px;" width="11.8" height="6" viewBox="0 0 11.8 6"><polyline points="0.7,0.7 5.9,5.1 11.1,0.7" fill="none" stroke="#dcdcdc" stroke-width="1.1" stroke-linecap="round" stroke-linejoin="round"/></svg>
<div style="left:157px;top:842px;width:18px;height:18px;border:1px solid #c6c6c6;border-radius:3px;border-width:1.2px;"></div>
<div class="t fd" style="left:185.00px;top:845.00px;font-size:17.7px;letter-spacing:0.016px;color:#f0f0f0;">Overprint</div>
<div class="t fd" style="left:267.00px;top:845.00px;font-size:17.7px;letter-spacing:0.200px;color:#f0f0f0;">Stroke</div>
<div class="t fd" style="left:62.60px;top:884.00px;font-size:17.7px;letter-spacing:0.067px;color:#f0f0f0;">Gap Color:</div>
<div style="left:292px;top:875px;width:31px;height:31px;background:#5c5c5c;border-radius:4px;"></div>
<div style="left:157px;top:876px;width:138px;height:29px;background:#e6e6e6;border-radius:1px 0 0 1px;"></div>
<svg style="left:162px;top:881px;" width="18" height="18" viewBox="0 0 18 18"><rect x="0.8" y="0.8" width="16.4" height="16.400" fill="#fff" stroke="#111" stroke-width="1.500"/><path d="M1.500 16.500L16.500 1.500" stroke="#b5401a" stroke-width="2"/></svg>
<div class="t fd" style="left:187.60px;top:885.00px;font-size:17.7px;letter-spacing:0.094px;color:#7c7c7c;">[None]</div>
<svg style="left:303.2px;top:888px;" width="11.8" height="6" viewBox="0 0 11.8 6"><polyline points="0.7,0.7 5.9,5.1 11.1,0.7" fill="none" stroke="#777" stroke-width="1.1" stroke-linecap="round" stroke-linejoin="round"/></svg>
<div style="left:157px;top:920px;width:18px;height:18px;border:1px solid #6d6d6d;border-radius:3px;border-width:1.2px;"></div>
<div class="t fd" style="left:185.20px;top:923.00px;font-size:17.7px;letter-spacing:-0.030px;color:#7c7c7c;">Overprint Gap</div>
<div class="t fd" style="left:51.20px;top:962.00px;font-size:17.7px;letter-spacing:0.352px;color:#f0f0f0;">Left Indent:</div>
<div style="left:156px;top:953px;width:83px;height:31px;background:#444444;border:1px solid #6c6c6c;border-radius:4px;"></div>
<div class="t fd" style="left:162.30px;top:961.00px;font-size:17.7px;color:#f0f0f0;">0 mm</div>
<div class="t fd" style="left:92.20px;top:1001.00px;font-size:17.7px;letter-spacing:0.191px;color:#f0f0f0;">Offset:</div>
<div style="left:156px;top:992px;width:83px;height:31px;background:#444444;border:1px solid #6c6c6c;border-radius:4px;"></div>
<div class="t fd" style="left:162.30px;top:1000.00px;font-size:17.7px;color:#f0f0f0;">0 mm</div>
<div class="t fd" style="left:578.80px;top:767.00px;font-size:17.7px;letter-spacing:0.773px;color:#f0f0f0;">Type:</div>
<div style="left:731px;top:758px;width:30px;height:31px;background:#444444;border:1px solid #6c6c6c;border-radius:4px;"></div>
<div style="left:634px;top:759px;width:100px;height:29px;background:#e6e6e6;border-radius:1px 0 0 1px;"></div>
<div style="left:640px;top:768px;width:88.5px;height:11px;background:#000;"></div>
<svg style="left:741px;top:770.8px;" width="11.8" height="6" viewBox="0 0 11.8 6"><polyline points="0.7,0.7 5.9,5.1 11.1,0.7" fill="none" stroke="#dcdcdc" stroke-width="1.1" stroke-linecap="round" stroke-linejoin="round"/></svg>
<div class="t fd" style="left:586.80px;top:806.00px;font-size:17.7px;letter-spacing:0.444px;color:#f0f0f0;">Tint:</div>
<div style="left:633px;top:797px;width:104px;height:31px;background:#444444;border:1px solid #6c6c6c;border-radius:4px;"></div>
<div class="t fd" style="left:638.60px;top:806.00px;font-size:17.7px;letter-spacing:0.378px;color:#f0f0f0;">100%</div>
<div style="left:708px;top:798px;width:1px;height:29px;background:#6c6c6c;"></div>
<svg style="left:716.8px;top:810px;" width="11.8" height="6" viewBox="0 0 11.8 6"><polyline points="0.7,0.7 5.9,5.1 11.1,0.7" fill="none" stroke="#dcdcdc" stroke-width="1.1" stroke-linecap="round" stroke-linejoin="round"/></svg>
<div class="t fd" style="left:549.80px;top:884.00px;font-size:17.7px;letter-spacing:0.220px;color:#f0f0f0;">Gap Tint:</div>
<div style="left:633px;top:875px;width:105px;height:31px;background:#5c5c5c;border-radius:4px;"></div>
<div class="t fd" style="left:638.60px;top:884.00px;font-size:17.7px;letter-spacing:0.378px;color:#7a7a7a;">100%</div>
<svg style="left:716.8px;top:888px;" width="11.8" height="6" viewBox="0 0 11.8 6"><polyline points="0.7,0.7 5.9,5.1 11.1,0.7" fill="none" stroke="#777" stroke-width="1.1" stroke-linecap="round" stroke-linejoin="round"/></svg>
<div class="t fd" style="left:572.80px;top:962.00px;font-size:17.7px;letter-spacing:-0.010px;color:#f0f0f0;">Width:</div>
<div style="left:633px;top:953px;width:83px;height:31px;background:#444444;border:1px solid #6c6c6c;border-radius:4px;"></div>
<div class="t fd" style="left:639.40px;top:961.00px;font-size:17.7px;letter-spacing:-0.139px;color:#f0f0f0;">25.4 mm</div>
</div>
</body>
</html>
